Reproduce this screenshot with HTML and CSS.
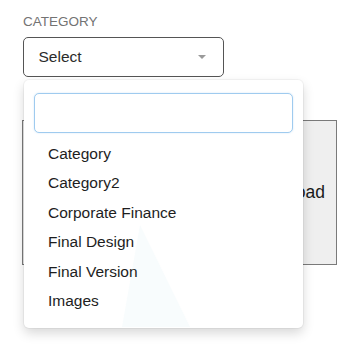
FILE: index.html
```html
<!DOCTYPE html>
<html>
<head>
<meta charset="utf-8">
<link rel="stylesheet" href="styles.css">
</head>
<body>
<div class="wrap">
  <div class="label">CATEGORY</div>
  <div class="select">
    <span class="select-text">Select</span>
    <span class="caret"></span>
  </div>
  <div class="upload">
    <span class="upload-text">Upload</span>
  </div>
  <div class="panel">
    <svg class="watermark" width="80" height="110" viewBox="0 0 80 110"><polygon points="18,2 0,104 68,104" fill="#f8fcfd" /></svg>
    <div class="search"></div>
    <ul class="options">
      <li>Category</li>
      <li>Category2</li>
      <li>Corporate Finance</li>
      <li>Final Design</li>
      <li>Final Version</li>
      <li>Images</li>
    </ul>
  </div>
</div>
</body>
</html>
```
FILE: styles.css
```css
html, body {
  margin: 0;
  background: #ffffff;
}
body {
  font-family: "Liberation Sans", Arial, sans-serif;
  color: #222;
  min-height: 347px;
}
.wrap {
  position: relative;
  min-height: 347px;
  box-sizing: border-box;
  padding: 14px 0 0 23px;
}
.label {
  font-size: 13.5px;
  line-height: 16px;
  color: #737373;
  margin-bottom: 7px;
}
.select {
  box-sizing: border-box;
  width: 201px;
  height: 40px;
  border: 1.5px solid #555;
  border-radius: 5px;
  display: flex;
  align-items: center;
  justify-content: space-between;
  padding: 0 17px 0 14.5px;
}
.select-text {
  font-size: 15.5px;
  color: #2b2b2b;
}
.caret {
  width: 0;
  height: 0;
  border-left: 4px solid transparent;
  border-right: 4px solid transparent;
  border-top: 4px solid #9a9a9a;
}
.upload {
  box-sizing: border-box;
  width: 315px;
  height: 145px;
  margin: 43px 0 0 -1px;
  border: 1.5px solid #7a7a7a;
  background: #efefef;
  display: flex;
  align-items: center;
  justify-content: flex-end;
  padding: 0 11px 0 0;
}
.upload-text {
  font-size: 17.5px;
  color: #1a1a1a;
}
.panel {
  position: absolute;
  left: 24px;
  top: 80px;
  width: 279px;
  box-sizing: border-box;
  padding: 13px 10px 12px;
  background: #fff;
  border-radius: 5px;
  box-shadow: 0 0 0 1px rgba(0,0,0,0.04), 0 5px 12px rgba(0,0,0,0.16);
}
.watermark {
  position: absolute;
  left: 98px;
  top: 143px;
}
.search {
  box-sizing: border-box;
  height: 40px;
  border: 1.5px solid #9fcbef;
  border-radius: 5px;
  background: #fff;
  box-shadow: 0 0 2px rgba(120,180,230,0.35);
}
.options {
  position: relative;
  list-style: none;
  margin: 5.5px 0 0;
  padding: 0;
}
.options li {
  height: 29.5px;
  line-height: 29.5px;
  padding-left: 14px;
  font-size: 15.5px;
  color: #1e1e1e;
}
```
